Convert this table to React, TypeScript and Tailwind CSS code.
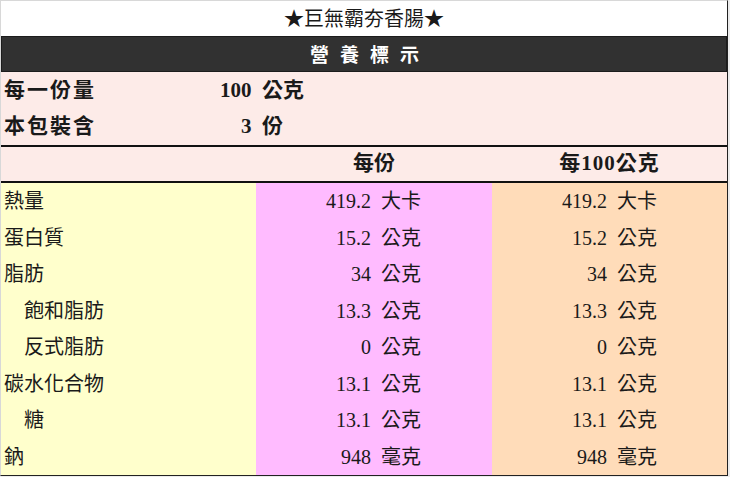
import React from "react";

const serif = { fontFamily: '"Liberation Serif", "Noto Sans CJK TC", serif' };
const sans = { fontFamily: '"Noto Sans CJK TC", "Noto Sans", sans-serif' };

const rows = [
  { name: "熱量", per: "419.2 大卡", per100: "419.2 大卡" },
  { name: "蛋白質", per: "15.2 公克", per100: "15.2 公克" },
  { name: "脂肪", per: "34 公克", per100: "34 公克" },
  { name: "飽和脂肪", per: "13.3 公克", per100: "13.3 公克", sub: true },
  { name: "反式脂肪", per: "0 公克", per100: "0 公克", sub: true },
  { name: "碳水化合物", per: "13.1 公克", per100: "13.1 公克" },
  { name: "糖", per: "13.1 公克", per100: "13.1 公克", sub: true },
  { name: "鈉", per: "948 毫克", per100: "948 毫克" },
];

export default function App() {
  return (
    <div className="w-[730px] h-[477px] bg-[#ececec] text-[#1a1a1a]">
      <div className="flex h-[476px] w-[728px] flex-col border-l border-t border-[#d8d8d8] border-r border-b border-r-[#222] border-b-[#222] bg-white">
        {/* title */}
        <div className="flex h-[35px] items-center justify-center pb-[1px] text-[20px]" style={sans}>
          ★巨無霸夯香腸★
        </div>

        <div
          className="flex h-[36px] items-center justify-center border border-[#1c1c1c] bg-[#313131] pl-[12px] text-[19px] font-bold tracking-[11px] text-white"
          style={sans}
        >
          營養標示
        </div>

        {/* serving info */}
        <div className="bg-[#fdebe8] text-[21px] font-bold" style={serif}>
          <div className="flex h-[37px] items-center">
            <span className="w-[190px] pl-[3px] tracking-[2px]">每一份量</span>
            <span className="w-[142px] text-center">100&nbsp; 公克</span>
          </div>
          <div className="flex h-[36px] items-center">
            <span className="w-[190px] pl-[3px] tracking-[2px]">本包裝含</span>
            <span className="w-[142px] text-center">3&nbsp; 份</span>
          </div>
        </div>

        <div className="h-[2px] bg-[#111]" />

        <div className="flex h-[34px] items-center bg-[#fdebe8] text-[21px] font-bold" style={serif}>
          <span className="w-[255px]" />
          <span className="w-[236px] text-center">每份</span>
          <span className="flex-1 text-center tracking-[1px]">每100公克</span>
        </div>

        <div className="h-[2px] bg-[#111]" />

        {/* nutrients */}
        <div className="grid flex-1 grid-rows-8 text-[20px]" style={serif}>
          {rows.map((r) => (
            <div key={r.name} className="flex">
              <div className={`flex w-[255px] items-center bg-[#ffffcc] ${r.sub ? "pl-[23px]" : "pl-[3px]"}`}>
                {r.name}
              </div>
              <div className="flex w-[236px] items-center justify-end bg-[#ffbbff] pr-[71px] whitespace-pre">{r.per.replace(" ", "  ")}</div>
              <div className="flex flex-1 items-center justify-end bg-[#ffdcb9] pr-[70px] whitespace-pre">{r.per100.replace(" ", "  ")}</div>
            </div>
          ))}
        </div>
      </div>
    </div>
  );
}
